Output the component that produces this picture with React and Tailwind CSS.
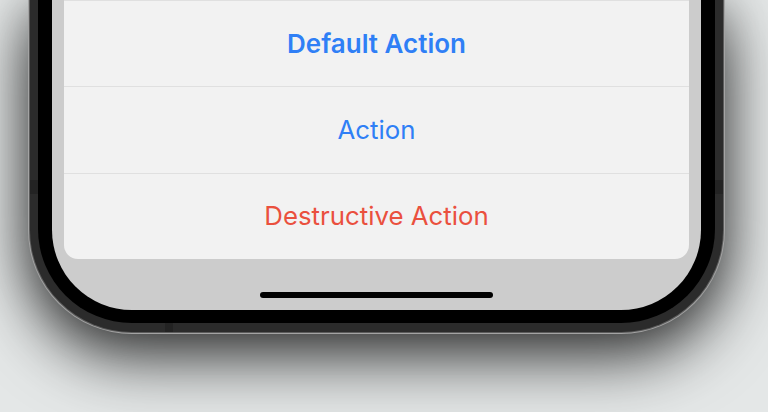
export default function App() {
  const font = { fontFamily: "Inter, 'Noto Sans', sans-serif" };
  return (
    <div className="w-[768px] h-[412px] overflow-hidden bg-[#e4e7e7]" style={font}>
      <div className="relative ml-[28px] w-[697px] h-[334px] rounded-b-[104px] bg-[#a3a3a3] px-[1px] pb-[1px] shadow-[0_24px_64px_rgba(0,0,0,0.75),0_0_40px_rgba(0,0,0,0.22)]">
        <div className="h-full rounded-b-[103px] bg-[#5c5c5c] px-[1px] pb-[1px]">
          <div className="h-full rounded-b-[102px] bg-[#2b2b2b] px-[8px] pb-[9px]">
            <div className="h-full rounded-b-[94px] bg-black px-[14px] pb-[13px]">
              <div className="h-full rounded-b-[80px] bg-[#cccccc] px-[12px] flex flex-col">
                <div className="h-[259px] rounded-b-[14px] bg-[#f2f2f2] flex flex-col overflow-hidden">
                  <div className="h-[86px] border-t border-[#e0e0e0] flex items-center justify-center text-[26px] font-semibold text-[#2f7ff6]">
                    Default Action
                  </div>
                  <div className="h-[87px] border-t border-[#e0e0e0] flex items-center justify-center text-[25.8px] text-[#2f7ff6]">
                    Action
                  </div>
                  <div className="h-[86px] border-t border-[#e0e0e0] flex items-center justify-center text-[25.8px] text-[#ea503e]">
                    Destructive Action
                  </div>
                </div>
                <div className="mt-[33px] mx-auto w-[233px] h-[6px] rounded-full bg-black" />
              </div>
            </div>
          </div>
        </div>
        <div className="absolute left-[2px] top-[180px] w-[8px] h-[14px] bg-[#232323]" />
        <div className="absolute right-[2px] top-[180px] w-[8px] h-[14px] bg-[#232323]" />
        <div className="absolute left-[137px] bottom-[2px] w-[8px] h-[9px] bg-[#232323]" />
      </div>
    </div>
  );
}
